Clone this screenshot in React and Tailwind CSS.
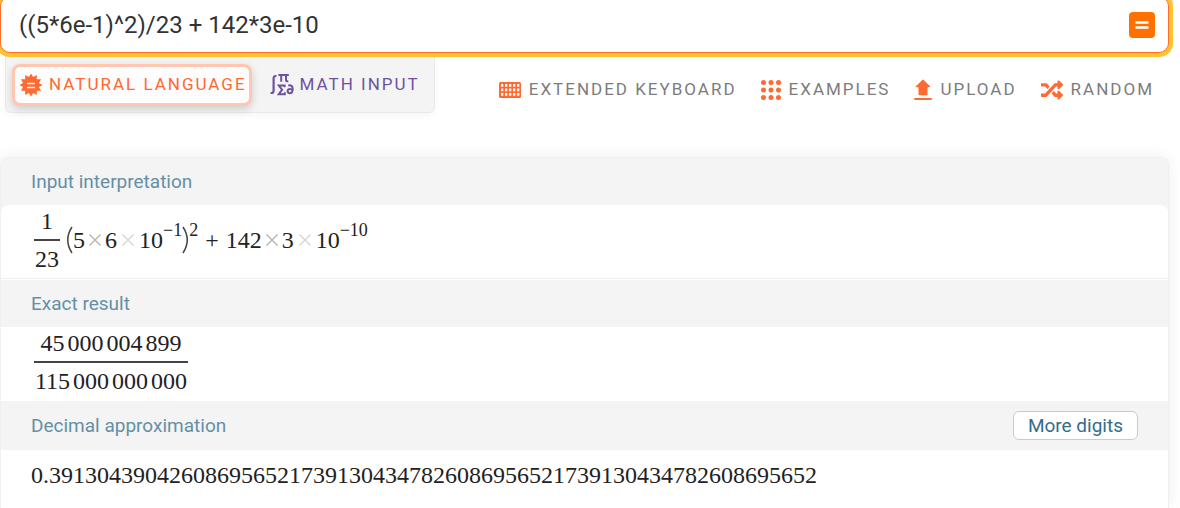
import { useState } from "react";
import { FaRandom } from "react-icons/fa";

const spikePoints = Array.from({ length: 24 }, (_, i) => {
  const r = i % 2 === 0 ? 11.6 : 8.2;
  const a = (Math.PI * i) / 12 - Math.PI / 2;
  return `${12 + r * Math.cos(a)},${12 + r * Math.sin(a)}`;
}).join(" ");

function SpikeyIcon() {
  return (
    <svg viewBox="0 0 24 24" className="size-6 shrink-0" aria-hidden="true">
      <polygon points={spikePoints} fill="#ff6932" />
      <path d="M8 10.5h8M8 14.5h8" stroke="#fff" strokeWidth="1.3" />
    </svg>
  );
}

function MathIcon() {
  return (
    <svg viewBox="0 0 24 24" className="size-6 shrink-0" fill="none" stroke="#6e52a0" aria-hidden="true">
      <path d="M6.400 3.300C4.700 2.500 3.600 3.400 3.600 5.200v12.200c0 2-.9 3-3 2.400" strokeWidth="2.200" />
      <path d="M8.400 2h10.400M11.200 2v6.800M16 2v5c0 1.200.6 1.500 2.300 1.200" strokeWidth="2" />
      <path d="M14.600 14.200v-1.700H8.800l3.300 4.200-3.300 4.500h6v-1.900" strokeWidth="2" />
      <path d="M18.200 12.600c2.800-.9 4.500.6 4.500 3.300 0 2.800-1.200 4.300-2.900 4.300-1.400 0-2.200-.9-2.200-2.100 0-1.300 1-2.200 2.300-2.200 1.100 0 2 .5 2.600 1.200" strokeWidth="2" />
    </svg>
  );
}

function KeyboardIcon() {
  return (
    <svg viewBox="0 0 22 16" className="h-4 w-[22px] shrink-0" aria-hidden="true">
      <rect width="22" height="16" rx="1.5" fill="#ff6932" />
      <g fill="#fff">
        {[2, 6, 10, 14, 18].map((x) =>
          [2, 6.5, 11].map((y) => <rect key={`${x}-${y}`} x={x} y={y} width="2.3" height="2.8" />)
        )}
      </g>
    </svg>
  );
}

function DotsIcon() {
  return (
    <svg viewBox="0 0 20 20" className="size-5 shrink-0" fill="#ff6932" aria-hidden="true">
      {[2.5, 10, 17.5].map((x) => [2.5, 10, 17.5].map((y) => <circle key={`${x}-${y}`} cx={x} cy={y} r="2.5" />))}
    </svg>
  );
}

function UploadIcon() {
  return (
    <svg viewBox="0 0 18 22" className="h-[22px] w-[18px] shrink-0" fill="#ff6932" aria-hidden="true">
      <path d="M8.3.9q.7-.7 1.400 0l6.400 6.300q.7.9-.5 1.100h-2.100v7.100q0 .8-.8.8H5.300q-.8 0-.8-.8V8.300H2.400q-1.200-.2-.5-1.100z" />
      <rect x="0.3" y="19" width="17.4" height="2" rx=".5" />
    </svg>
  );
}

function RandomIcon() {
  return <FaRandom className="size-[22px] shrink-0 text-[#ff6932]" aria-hidden="true" />;
}

const tools = [
  { label: "EXTENDED KEYBOARD", Icon: KeyboardIcon },
  { label: "EXAMPLES", Icon: DotsIcon },
  { label: "UPLOAD", Icon: UploadIcon },
  { label: "RANDOM", Icon: RandomIcon },
];

function Times({ scientific }) {
  return (
    <svg
      viewBox="0 0 12 12"
      className={scientific ? "mx-[5px] size-3 shrink-0 text-[#d6d6d6]" : "mx-1 size-3 shrink-0 text-[#b4b4b4]"}
      role="img"
      aria-label="times"
    >
      <path d="M.5.5l11 11M11.5.5l-11 11" stroke="currentColor" strokeWidth="1.4" />
    </svg>
  );
}

function Paren({ close }) {
  return (
    <svg viewBox="0 0 7 28" className="h-7 w-[7px] shrink-0" fill="none" role="img" aria-label={close ? "close" : "open"}>
      <path d={close ? "M1 1Q9.5 14 1 27" : "M6 1Q-2.5 14 6 27"} stroke="#444" strokeWidth="1.5" />
    </svg>
  );
}

function Sup({ children }) {
  return <span className="-translate-y-2.5 text-lg">{children}</span>;
}

function Fraction({ top, bottom }) {
  return (
    <span className="inline-flex flex-col items-center">
      <span>{top}</span>
      <span className="mt-1.5 self-stretch border-t-2 border-[#444] px-px pt-1.5">{bottom}</span>
    </span>
  );
}

function Grouped({ parts }) {
  return (
    <span className="flex gap-[3px]">
      {parts.map((p, i) => (
        <span key={i}>{p}</span>
      ))}
    </span>
  );
}

function PodHeader({ title, children }) {
  return (
    <header className="flex min-h-[47px] items-center justify-between bg-[#f4f4f4] px-[30px] py-2.5">
      <h2 className="text-[19px] leading-6 text-[#658fa5]">{title}</h2>
      {children}
    </header>
  );
}

export default function App() {
  const [query, setQuery] = useState("((5*6e-1)^2)/23 + 142*3e-10");
  return (
    <div className="flex min-h-screen flex-col overflow-hidden bg-white font-['Roboto',sans-serif]">
      <form
        onSubmit={(e) => e.preventDefault()}
        className="z-10 -mt-1 mr-[11px] flex h-[57px] items-center rounded-[10px] border border-[#ff6f2c] bg-white pr-[13px] pl-[18px] shadow-[0_0_0_4px_#ffc230]"
      >
        <input
          aria-label="Query"
          value={query}
          onChange={(e) => setQuery(e.target.value)}
          className="min-w-0 flex-1 bg-transparent text-2xl text-[#333] outline-none"
        />
        <button aria-label="Compute" className="flex size-[26px] items-center justify-center rounded bg-[#ff7000]">
          <svg viewBox="0 0 14 10" className="h-2.5 w-3.5" aria-hidden="true">
            <path d="M.5 2.5h13M.5 7.5h13" stroke="#fff" strokeWidth="2.4" />
          </svg>
        </button>
      </form>

      <nav className="mr-[26px] ml-[5px] flex items-start justify-between text-[17px] tracking-[2px]">
        <div className="flex h-[60px] items-center rounded-b-md border border-[#e9e9e9] bg-[#f4f4f4] pt-1 pr-3.5 pl-1.5 shadow-[0_2px_8px_#0000000a]">
          <button className="flex h-[42px] items-center gap-1.5 rounded-lg border-3 border-[#ffc6b1] bg-[#fdfdfd] pr-0.5 pl-1 text-[#ff6932] shadow-[0_3px_8px_#0000002a]">
            <SpikeyIcon />
            NATURAL LANGUAGE
          </button>
          <button className="ml-[18px] flex h-[42px] items-center gap-1.5 text-[#6e52a0]">
            <MathIcon />
            MATH INPUT
          </button>
        </div>
        <div className="flex h-[74px] items-center gap-6 text-[#7c7c7c]">
          {tools.map(({ label, Icon }) => (
            <button key={label} className="flex items-center gap-2">
              <Icon />
              {label}
            </button>
          ))}
        </div>
      </nav>

      <main className="mt-[30px] mr-[11px] flex-1 rounded-t-lg border border-b-0 border-[#f0f0f0] bg-white shadow-[0_0_16px_#00000012]">
        <section className="rounded-t-lg bg-[#f4f4f4]">
          <PodHeader title="Input interpretation" />
          <div className="flex h-[73px] items-center rounded-t-lg bg-white pb-[3px] pl-[33px] font-['Liberation_Serif',serif] text-2xl leading-none text-[#222]">
            <Fraction top="1" bottom="23" />
            <span className="ml-1.5 flex items-center">
              <Paren />
              <span>5</span>
              <Times />
              <span>6</span>
              <Times scientific />
              <span>10</span>
              <Sup>−1</Sup>
              <Paren close />
              <Sup>2</Sup>
              <span className="mx-[7px]">+</span>
              <span>142</span>
              <Times />
              <span>3</span>
              <Times scientific />
              <span>10</span>
              <Sup>−10</Sup>
            </span>
          </div>
        </section>
        <section className="border-t border-[#f0f0f0] pt-px">
          <PodHeader title="Exact result" />
          <div className="flex h-[74px] items-center pb-[5px] pl-[33px] font-['Liberation_Serif',serif] text-2xl leading-none text-[#222]">
            <Fraction
              top={<Grouped parts={["45", "000", "004", "899"]} />}
              bottom={<Grouped parts={["115", "000", "000", "000"]} />}
            />
          </div>
        </section>
        <section>
          <PodHeader title="Decimal approximation">
            <button className="h-[29px] rounded-md border border-[#b4d3df] bg-white px-3.5 text-[19px] leading-none text-[#356c8c]">
              More digits
            </button>
          </PodHeader>
          <p className="pt-[11px] pl-[30px] font-['Liberation_Serif',serif] text-2xl leading-7 text-[#222]">
            0.3913043904260869565217391304347826086956521739130434782608695652
          </p>
        </section>
      </main>
    </div>
  );
}
